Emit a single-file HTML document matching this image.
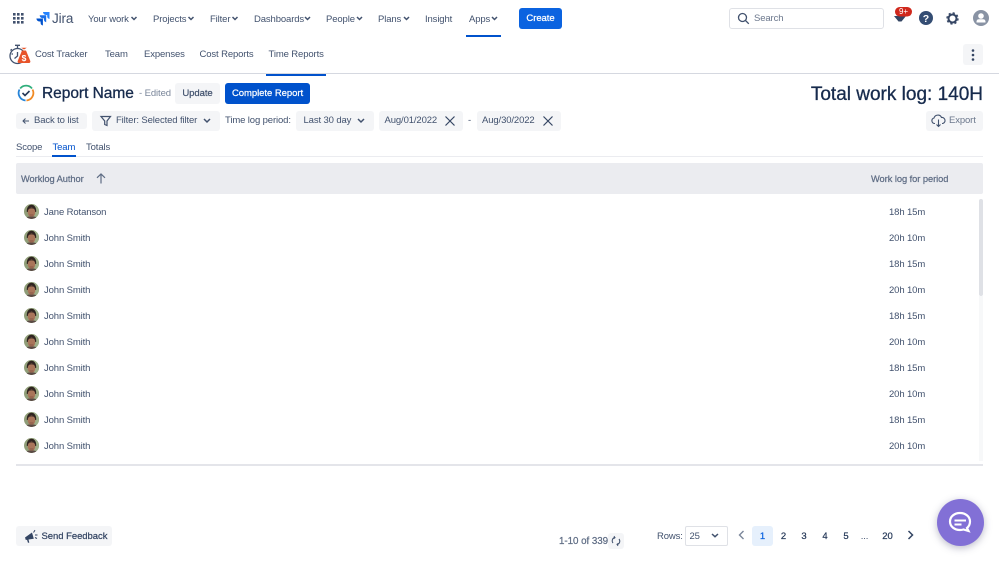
<!DOCTYPE html>
<html><head><meta charset="utf-8">
<style>
html,body{margin:0;padding:0;background:#fff}
body{width:999px;height:562px;position:relative;overflow:hidden;font-family:"Liberation Sans",sans-serif;color:#42526e}
.t{position:absolute;white-space:nowrap;font-size:9.5px;line-height:14px;color:#42526e;letter-spacing:-.12px;transform:translateY(1px)}
.m{-webkit-text-stroke:.22px currentColor;letter-spacing:-.05px}
.b{position:absolute;border-radius:3px;background:#f4f5f7}
svg{position:absolute;overflow:visible}
</style></head><body>

<!-- top nav -->
<svg style="left:13px;top:13px" width="11" height="11"><g fill="#42526e"><rect x="0" y="0" width="2.6" height="2.6"/><rect x="4" y="0" width="2.6" height="2.6"/><rect x="8" y="0" width="2.6" height="2.6"/><rect x="0" y="4" width="2.6" height="2.6"/><rect x="4" y="4" width="2.6" height="2.6"/><rect x="8" y="4" width="2.6" height="2.6"/><rect x="0" y="8" width="2.6" height="2.6"/><rect x="4" y="8" width="2.6" height="2.6"/><rect x="8" y="8" width="2.6" height="2.6"/></g></svg>
<svg style="left:36px;top:12px" width="14" height="14" viewBox="0 0 14 14"><path d="M13.5 0H7a3 3 0 0 0 3 3h1.200v1.200a3 3 0 0 0 2.300 2.800z" fill="#2684ff"/><path d="M10.200 3.200H3.700a3 3 0 0 0 3 3h1.200v1.200a3 3 0 0 0 2.300 2.800z" fill="#1a6fe8"/><path d="M6.900 6.500H.4a3 3 0 0 0 3 3h1.200v1.200A3 3 0 0 0 6.900 13.500z" fill="#0052cc"/></svg>
<span class="t" style="left:52px;top:7.500px;font-size:13.500px;line-height:20px;color:#42526e">Jira</span>

<span class="t" style="left:88px;top:11.500px">Your work</span>
<span class="t" style="left:153px;top:11.500px">Projects</span>
<span class="t" style="left:210px;top:11.500px">Filter</span>
<span class="t" style="left:254px;top:11.500px">Dashboards</span>
<span class="t" style="left:326px;top:11.500px">People</span>
<span class="t" style="left:378px;top:11.500px">Plans</span>
<span class="t" style="left:425px;top:11.500px">Insight</span>
<span class="t" style="left:469px;top:11.500px">Apps</span>
<svg style="left:0;top:0" width="999" height="40" fill="none" stroke="#42526e" stroke-width="1.500"><path d="M131.500 17l2.500 2.500 2.500-2.500M188.500 17l2.500 2.500 2.500-2.500M232.500 17l2.500 2.500 2.500-2.500M305 17l2.500 2.500 2.500-2.500M357 17l2.500 2.500 2.500-2.500M404 17l2.500 2.500 2.500-2.500M492 17l2.500 2.500 2.500-2.500"/></svg>
<div style="position:absolute;left:466px;top:34.500px;width:35px;height:2px;background:#0052cc"></div>
<div class="b" style="left:519px;top:8px;width:43px;height:21px;background:#0b63e0"></div>
<span class="t m" style="left:519px;top:10.500px;width:43px;text-align:center;color:#fff">Create</span>

<div style="position:absolute;left:729px;top:8px;width:153px;height:19px;border:1.500px solid #dfe1e6;border-radius:3px;background:#fff"></div>
<svg style="left:737px;top:12px" width="13" height="13" fill="none" stroke="#42526e" stroke-width="1.300"><circle cx="5.500" cy="5.500" r="4"/><path d="M8.500 8.500l3.300 3.300"/></svg>
<span class="t" style="left:754px;top:10.500px;color:#6b778c">Search</span>

<svg style="left:893px;top:5px" width="20" height="20"><path d="M1 11h12l-4.500 5.500h-3z" fill="#344563"/><rect x="2" y="2" width="17" height="9.500" rx="4.700" fill="#d0281c"/></svg>
<span class="t" style="left:895px;top:4.500px;width:17px;text-align:center;color:#fff;font-size:8px;line-height:12px">9+</span>

<svg style="left:919px;top:11px" width="14" height="14"><circle cx="7" cy="7" r="7" fill="#344d73"/><text x="7" y="10.800" text-anchor="middle" font-family="Liberation Sans" font-weight="bold" font-size="10.500" fill="#fff">?</text></svg>
<svg style="left:946px;top:12px" width="13" height="13"><circle cx="6.500" cy="6.500" r="4" fill="none" stroke="#344563" stroke-width="2"/><circle cx="6.500" cy="6.500" r="5.500" fill="none" stroke="#344563" stroke-width="1.400" stroke-dasharray="2.200 2.120"/></svg>
<svg style="left:973px;top:10px" width="16" height="16"><circle cx="8" cy="8" r="8" fill="#8993a4"/><circle cx="8" cy="6" r="2.800" fill="#fff"/><path d="M3.500 12.500V11.500a2.500 2.500 0 0 1 2.500-2.200h4a2.500 2.500 0 0 1 2.500 2.200v1z" fill="#fff"/></svg>

<!-- second nav -->
<svg style="left:9px;top:43px" width="22" height="23" viewBox="0 0 22 23"><g fill="none" stroke="#42526e" stroke-width="1.300"><circle cx="8.500" cy="13" r="7.500"/><path d="M6 2.300h5M8.500 2.500v3M2.800 6.200L1.500 7.500M8.500 9v4l-3 2.500M2.500 11h1.500"/></g><path d="M15 6.500l-2.800-1.800h5.600zM13 7.500h4l4.300 10.500c.3 1-.3 2-1.300 2H10c-1 0-1.600-1-1.300-2z" fill="#e8542a"/><text x="15" y="18.200" text-anchor="middle" font-family="Liberation Sans" font-weight="bold" font-size="8.500" fill="#fff">$</text></svg>
<span class="t" style="left:35px;top:47px">Cost Tracker</span>
<span class="t" style="left:105px;top:47px">Team</span>
<span class="t" style="left:144px;top:47px">Expenses</span>
<span class="t" style="left:199.500px;top:47px">Cost Reports</span>
<span class="t" style="left:268.500px;top:47px">Time Reports</span>
<div class="b" style="left:963px;top:44px;width:20px;height:21px"></div>
<svg style="left:970px;top:49px" width="6" height="13" fill="#344563"><circle cx="3" cy="1.500" r="1.300"/><circle cx="3" cy="6" r="1.300"/><circle cx="3" cy="10.500" r="1.300"/></svg>
<div style="position:absolute;left:0;top:73px;width:999px;height:1px;background:#d5d8e0"></div>
<div style="position:absolute;left:266px;top:73.500px;width:60px;height:2px;background:#0052cc"></div>

<!-- report row -->
<svg style="left:17px;top:84px" width="18" height="18" viewBox="0 0 18 18" fill="none" stroke-width="1.800"><path d="M3.200 4.500A7.500 7.500 0 0 1 15 4.500" stroke="#2fae7b"/><path d="M15.500 5.500A7.500 7.500 0 0 1 9.500 16.500" stroke="#f08a24"/><path d="M8.500 16.500A7.500 7.500 0 0 1 2.500 5.500" stroke="#2684d8"/><path d="M5.500 9l2.500 2.500 4.500-4.500" stroke="#253858" stroke-width="1.600"/></svg>
<span class="t" style="left:42px;top:82px;font-size:15.500px;line-height:21px;color:#172b4d;letter-spacing:-.03px;-webkit-text-stroke:.3px #172b4d">Report Name</span>
<span class="t" style="left:139px;top:86px;color:#7a869a;font-size:9.500px;letter-spacing:-.1px">- Edited</span>
<div class="b" style="left:175px;top:83px;width:45px;height:21px"></div>
<span class="t m" style="left:175px;top:86px;width:45px;text-align:center">Update</span>
<div class="b" style="left:225px;top:83px;width:85px;height:21px;background:#0052cc"></div>
<span class="t m" style="left:225px;top:86px;width:85px;text-align:center;color:#fff">Complete Report</span>
<span class="t" style="right:16px;top:80.500px;font-size:19px;line-height:25px;color:#172b4d;letter-spacing:0;-webkit-text-stroke:.3px #172b4d">Total work log: 140H</span>

<!-- filter row -->
<div class="b" style="left:16px;top:113px;width:71px;height:16px"></div>
<svg style="left:22px;top:117px" width="8" height="8" fill="none" stroke="#42526e" stroke-width="1"><path d="M7 4H1M3.500 1.500L1 4l2.500 2.500"/></svg>
<span class="t" style="left:34px;top:113px">Back to list</span>
<div class="b" style="left:92px;top:111px;width:128px;height:20px"></div>
<svg style="left:100px;top:115px" width="12" height="12" fill="none" stroke="#42526e" stroke-width="1.200"><path d="M1 1.500h9.500L7 6v4.500L4.700 9.500V6z"/></svg>
<span class="t" style="left:116px;top:113px">Filter: Selected filter</span>
<svg style="left:203px;top:118px" width="8" height="6" fill="none" stroke="#42526e" stroke-width="1.500"><path d="M1 1l3 3 3-3"/></svg>
<span class="t" style="left:225px;top:113px">Time log period:</span>
<div class="b" style="left:296px;top:111px;width:78px;height:20px"></div>
<span class="t" style="left:303.500px;top:113px">Last 30 day</span>
<svg style="left:357px;top:118px" width="8" height="6" fill="none" stroke="#42526e" stroke-width="1.500"><path d="M1 1l3 3 3-3"/></svg>
<div class="b" style="left:379px;top:111px;width:84px;height:20px"></div>
<span class="t" style="left:384.500px;top:113px">Aug/01/2022</span>
<svg style="left:445px;top:116px" width="10" height="10" fill="none" stroke="#344563" stroke-width="1.200"><path d="M.5.500l9 9M9.500.500l-9 9"/></svg>
<span class="t" style="left:468px;top:113px">-</span>
<div class="b" style="left:477px;top:111px;width:84px;height:20px"></div>
<span class="t" style="left:482px;top:113px">Aug/30/2022</span>
<svg style="left:543px;top:116px" width="10" height="10" fill="none" stroke="#344563" stroke-width="1.200"><path d="M.5.500l9 9M9.500.500l-9 9"/></svg>
<div class="b" style="left:926px;top:111px;width:57px;height:20px"></div>
<svg style="left:931px;top:114px" width="15" height="14" fill="none" stroke="#42526e" stroke-width="1.100"><path d="M4 9.500H3.500A2.800 2.800 0 0 1 3 4a4 4 0 0 1 7.500-.5A3 3 0 0 1 11.500 9.500H11M7.500 5.500v7M5.500 10.500l2 2 2-2"/></svg>
<span class="t" style="left:949px;top:113px;color:#6b778c">Export</span>

<!-- tabs -->
<span class="t" style="left:16px;top:139.500px">Scope</span>
<span class="t" style="left:52.500px;top:139.500px;color:#0052cc">Team</span>
<span class="t" style="left:86px;top:139.500px">Totals</span>
<div style="position:absolute;left:16px;top:156px;width:967px;height:1px;background:#ebecf0"></div>
<div style="position:absolute;left:52px;top:155px;width:23.500px;height:2px;background:#0052cc"></div>

<!-- table head -->
<div style="position:absolute;left:16px;top:163px;width:967px;height:31px;background:#ebecf0;border-radius:2px"></div>
<span class="t m" style="left:21px;top:171px;color:#5e6c84;font-size:9.300px">Worklog Author</span>
<svg style="left:96px;top:173px" width="10" height="11" fill="none" stroke="#5e6c84" stroke-width="1.200"><path d="M5 10.500V1M1 4.800L5 1l4 3.800"/></svg>
<span class="t m" style="left:871px;top:171px;color:#5e6c84;font-size:9.300px">Work log for period</span>

<!-- scrollbar -->
<div style="position:absolute;left:979px;top:199px;width:4px;height:97px;background:#dfe1e6;border-radius:2px"></div>
<div style="position:absolute;left:979px;top:296px;width:4px;height:165px;background:#f7f8f9"></div>

<!-- rows -->
<svg width="0" height="0" style="position:absolute"><defs><clipPath id="cp"><circle cx="7.500" cy="7.500" r="7.500"/></clipPath><g id="av" clip-path="url(#cp)"><rect width="15" height="15" fill="#8f9d78"/><rect x="10" width="5" height="15" fill="#9fb08a"/><path d="M2.800 8C2.500 3 5 .8 7.500.8s5 2.200 4.700 7.200z" fill="#2f2420"/><ellipse cx="7.500" cy="8.300" rx="3.800" ry="4.700" fill="#a9755a"/><path d="M4 5.500c1-1.500 6-1.500 7 0V4H4z" fill="#2f2420"/><path d="M5.500 10.600h4v.8h-4z" fill="#7a4f40"/><path d="M1.500 15.500c.5-2.800 2.500-3 6-3s5.500.2 6 3z" fill="#5a4a44"/></g></defs></svg>
<svg style="left:24px;top:204px" width="15" height="15"><use href="#av"/></svg><span class="t" style="left:44px;top:205px">Jane Rotanson</span><span class="t" style="left:889px;top:205px">18h 15m</span>
<svg style="left:24px;top:230px" width="15" height="15"><use href="#av"/></svg><span class="t" style="left:44px;top:231px">John Smith</span><span class="t" style="left:889px;top:231px">20h 10m</span>
<svg style="left:24px;top:256px" width="15" height="15"><use href="#av"/></svg><span class="t" style="left:44px;top:257px">John Smith</span><span class="t" style="left:889px;top:257px">18h 15m</span>
<svg style="left:24px;top:282px" width="15" height="15"><use href="#av"/></svg><span class="t" style="left:44px;top:283px">John Smith</span><span class="t" style="left:889px;top:283px">20h 10m</span>
<svg style="left:24px;top:308px" width="15" height="15"><use href="#av"/></svg><span class="t" style="left:44px;top:309px">John Smith</span><span class="t" style="left:889px;top:309px">18h 15m</span>
<svg style="left:24px;top:334px" width="15" height="15"><use href="#av"/></svg><span class="t" style="left:44px;top:335px">John Smith</span><span class="t" style="left:889px;top:335px">20h 10m</span>
<svg style="left:24px;top:360px" width="15" height="15"><use href="#av"/></svg><span class="t" style="left:44px;top:361px">John Smith</span><span class="t" style="left:889px;top:361px">18h 15m</span>
<svg style="left:24px;top:386px" width="15" height="15"><use href="#av"/></svg><span class="t" style="left:44px;top:387px">John Smith</span><span class="t" style="left:889px;top:387px">20h 10m</span>
<svg style="left:24px;top:412px" width="15" height="15"><use href="#av"/></svg><span class="t" style="left:44px;top:413px">John Smith</span><span class="t" style="left:889px;top:413px">18h 15m</span>
<svg style="left:24px;top:438px" width="15" height="15"><use href="#av"/></svg><span class="t" style="left:44px;top:439px">John Smith</span><span class="t" style="left:889px;top:439px">20h 10m</span>
<div style="position:absolute;left:16px;top:464px;width:967px;height:2px;background:#e4e5ea"></div>

<!-- footer -->
<div class="b" style="left:16px;top:526px;width:96px;height:20px"></div>
<svg style="left:24px;top:529px" width="14" height="14" fill="#344563"><path d="M1 8.500L8 3.500l1.800 6.300L4.500 10.500l.8 3-1.300.4L3 10.800 1.800 11z"/><path d="M9.500 3.500l1.500-2.300M11 6h2.500M11 8.500l2 1" stroke="#344563" stroke-width="1" fill="none"/></svg>
<span class="t m" style="left:41.500px;top:529px;color:#344563">Send Feedback</span>

<span class="t m" style="left:559px;top:534px;color:#5e6c84;font-size:9.800px">1-10 of 339</span>
<div class="b" style="left:608px;top:533px;width:16px;height:16px"></div>
<svg style="left:611px;top:536px" width="10" height="10" fill="none" stroke="#42526e" stroke-width="1"><path d="M2 7A3.500 3.500 0 0 1 3.500 1.500M8 3a3.500 3.500 0 0 1-1.500 5.500M3 .2l1 1.500-1.500 1M7 9.800l-1-1.500 1.500-1"/></svg>
<span class="t" style="left:657px;top:529px">Rows:</span>
<div style="position:absolute;left:684.500px;top:526px;width:41px;height:18px;border:1.300px solid #dfe1e6;border-radius:2px;background:#fff"></div>
<span class="t" style="left:689.500px;top:529px">25</span>
<svg style="left:711px;top:533px" width="8" height="6" fill="none" stroke="#42526e" stroke-width="1.500"><path d="M1 1l3 2.700 3-2.700"/></svg>
<svg style="left:738px;top:530px" width="7" height="10" fill="none" stroke="#7a869a" stroke-width="1.400"><path d="M5.500 1L1.500 5l4 4"/></svg>
<div class="b" style="left:752px;top:526px;width:21px;height:20px;background:#e6f0fc"></div>
<span class="t m" style="left:752px;top:529px;width:21px;text-align:center;color:#0b63e0">1</span>
<span class="t m" style="left:773px;top:529px;width:21px;text-align:center;color:#253858">2</span>
<span class="t m" style="left:793.500px;top:529px;width:21px;text-align:center;color:#253858">3</span>
<span class="t m" style="left:814.500px;top:529px;width:21px;text-align:center;color:#253858">4</span>
<span class="t m" style="left:835.500px;top:529px;width:21px;text-align:center;color:#253858">5</span>
<span class="t" style="left:854px;top:529px;width:21px;text-align:center;color:#42526e">...</span>
<span class="t m" style="left:877px;top:529px;width:21px;text-align:center;color:#253858">20</span>
<svg style="left:907px;top:530px" width="7" height="10" fill="none" stroke="#344563" stroke-width="1.500"><path d="M1.500 1l4 4-4 4"/></svg>

<div style="position:absolute;left:937px;top:499px;width:47px;height:47px;border-radius:50%;background:#8270d6;box-shadow:0 2px 8px rgba(60,60,100,.35)"></div>
<svg style="left:947px;top:510px" width="27" height="25" fill="none" stroke="#fff"><path d="M13 3c5.500 0 10 3.500 10 8.500 0 3-1.500 5.300-3 6.500l1.500 3-5-1.500c-1.200.4-2.200.5-3.500.5-5.500 0-10-3.500-10-8.500S7.500 3 13 3z" stroke-width="2.200"/><path d="M7.500 10.500h11.500M7.500 14.500h7" stroke-width="2"/></svg>

</body></html>
